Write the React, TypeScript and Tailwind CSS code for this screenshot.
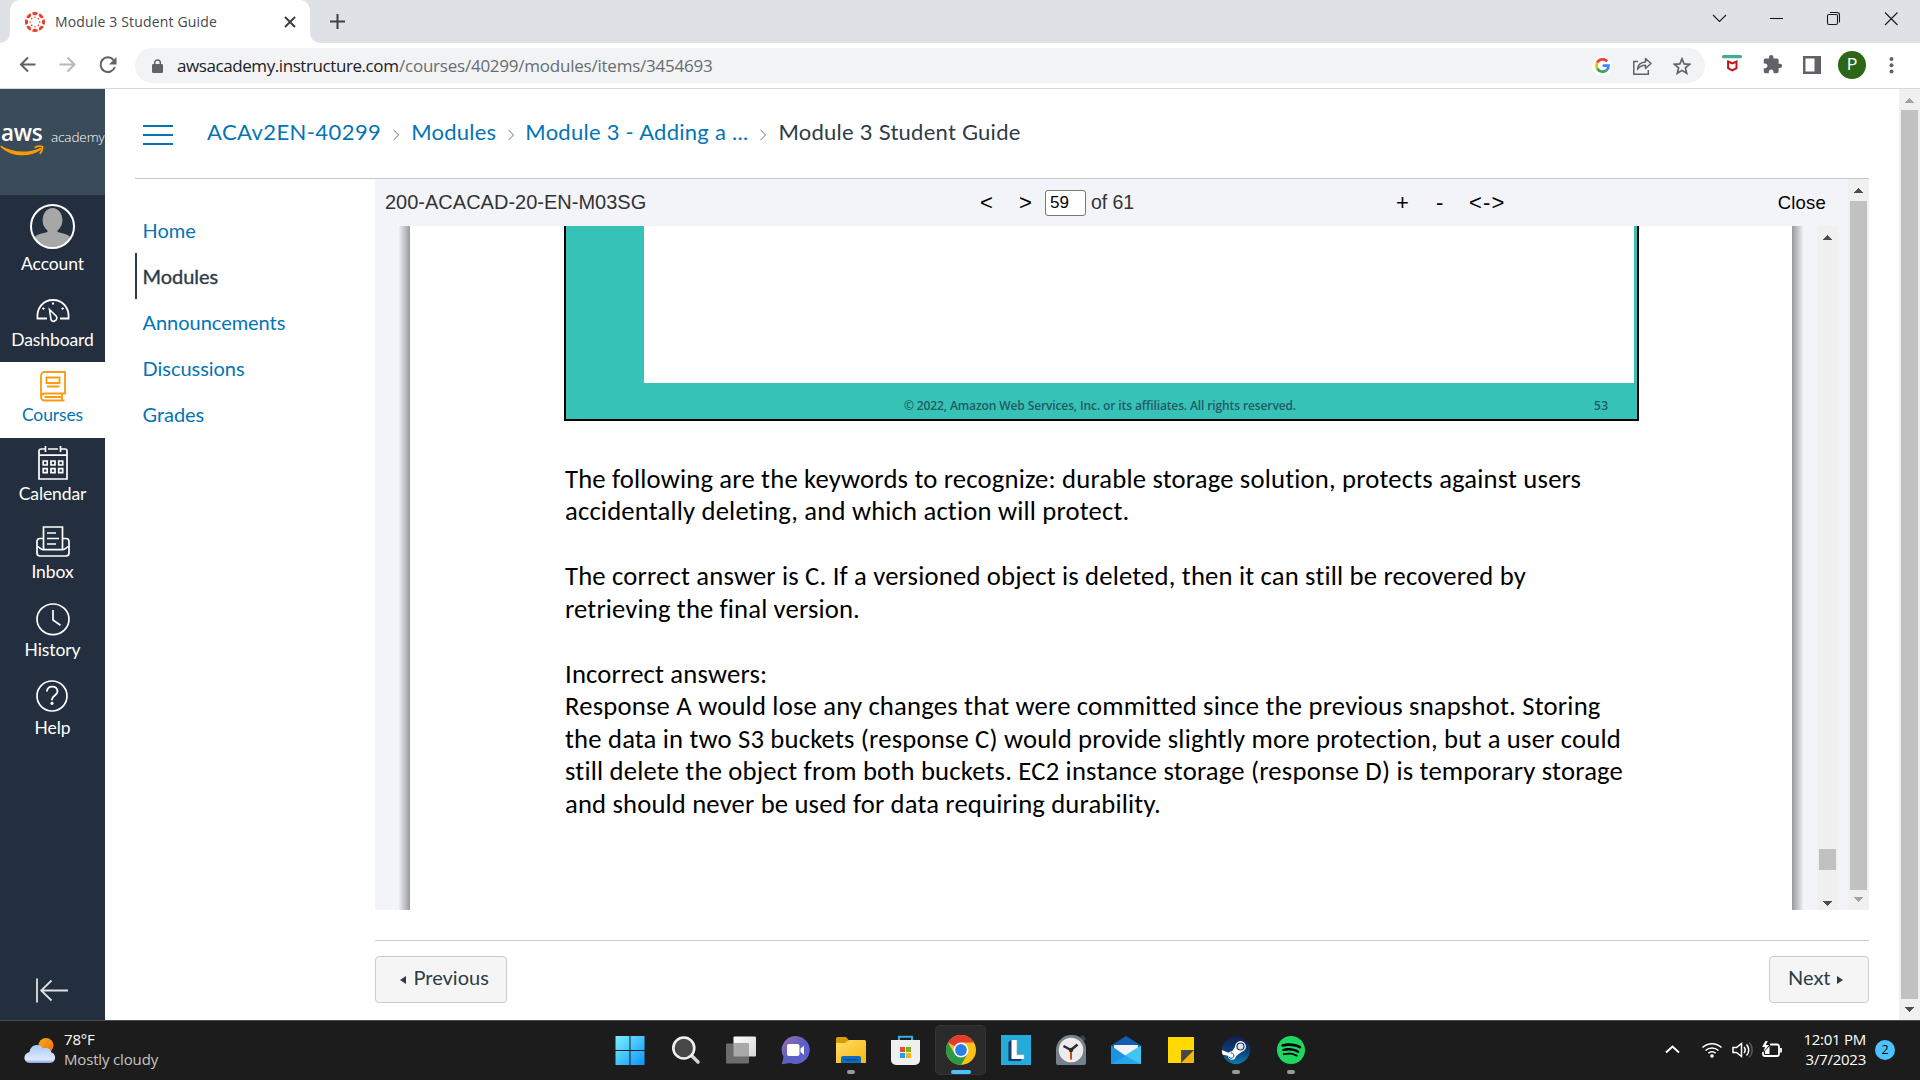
import type { ReactNode } from "react";
import { FaSpotify } from "react-icons/fa";
import { MdExtension } from "react-icons/md";

function CanvasFavicon() {
  return (
    <svg width="20" height="20" viewBox="0 0 20 20" fill="#e8402a">
      {[0, 45, 90, 135, 180, 225, 270, 315].map((a) => (
        <g key={a} transform={`rotate(${a} 10 10)`}>
          <path d="M7.2 .4a10 10 0 0 1 5.6 0 2.8 2.8 0 0 1-5.6 0Z" />
          <circle cx="10" cy="5.3" r=".8" />
        </g>
      ))}
    </svg>
  );
}

function TabStrip() {
  return (
    <div className="flex h-[43px] bg-[#dee1e6]">
      <div className="flex w-[10px] items-end bg-white">
        <div className="h-full w-full rounded-br-[10px] bg-[#dee1e6]" />
      </div>
      <div className="flex h-full w-[300px] items-center rounded-t-[10px] bg-white pl-[15px]">
        <CanvasFavicon />
        <span className="ml-[10px] w-[229px] pb-px whitespace-nowrap font-['Open_Sans',sans-serif] text-[14px] tracking-[0.16px] text-[#45484c]">
          Module 3 Student Guide
        </span>
        <svg width="12" height="12" viewBox="0 0 12 12" stroke="#3c4043" strokeWidth="2">
          <path d="M1 1l10 10M11 1l-10 10" />
        </svg>
      </div>
      <div className="flex w-[10px] items-end bg-white">
        <div className="h-full w-full rounded-bl-[10px] bg-[#dee1e6]" />
      </div>
      <svg className="mt-[14px] ml-[10px]" width="15" height="15" viewBox="0 0 15 15" stroke="#3c4043" strokeWidth="2">
        <path d="M0 7.5h15M7.5 0v15" />
      </svg>
      <svg className="mt-[11px] ml-auto mr-[22px]" width="186" height="16" viewBox="0 0 186 16" fill="none" stroke="#1b1b1b" strokeWidth="1.1">
        <path d="M1 4l6.500 6.500L14 4" />
        <path d="M58 7.500h13" />
        <rect x="115.500" y="3.500" width="10" height="10" rx="1.500" />
        <path d="M118 1.500h7a2.500 2.500 0 0 1 2.500 2.500v7.500" />
        <path d="M173 1.500l12.500 12.500M185.500 1.500L173 14" />
      </svg>
    </div>
  );
}

function AddressBar() {
  return (
    <div className="flex h-[46px] items-start border-b border-[#d5d7da] bg-white">
      <svg className="mt-[12px] ml-[19px]" width="100" height="20" viewBox="0 0 100 20" fill="none" strokeWidth="2">
        <path stroke="#5f6368" d="M16.500 9.500H2M9 2.500l-7 7 7 7" />
        <path stroke="#b6b8ba" d="M40.500 9.500H55M48.500 2.500l7 7-7 7" />
        <path stroke="#5f6368" d="M94.500 5A7.300 7.300 0 1 0 95.800 12" />
        <path fill="#5f6368" stroke="none" d="M97.500 2v7.500H90z" />
      </svg>
      <div className="mt-[5px] ml-[16px] flex h-[35px] w-[1570px] items-center rounded-full bg-[#f1f3f4] font-['Open_Sans',sans-serif] text-[17px]">
        <svg className="ml-[17px]" width="11" height="14" viewBox="0 0 11 14">
          <rect y="5" width="11" height="9" rx="1.300" fill="#5f6368" />
          <path d="M2.700 5.500V3.700a2.800 2.800 0 0 1 5.600 0v1.800" fill="none" stroke="#5f6368" strokeWidth="1.500" />
        </svg>
        <span className="ml-[14px] w-[222px] whitespace-nowrap tracking-[-0.42px] text-[#202124]">awsacademy.instructure.com</span>
        <span className="whitespace-nowrap tracking-[-0.23px] text-[#686c70]">/courses/40299/modules/items/3454693</span>
        <span className="ml-auto flex h-[20px] w-[20px] items-center justify-center rounded-full bg-white">
          <svg width="15" height="15" viewBox="0 0 15 15" fill="none" strokeWidth="2.700">
            <path d="M12.200 3.300A6.100 6.100 0 0 0 2.200 4.700" stroke="#ea4335" />
            <path d="M2.200 4.700a6.100 6.100 0 0 0 0 5.600" stroke="#fbbc05" />
            <path d="M2.200 10.300a6.100 6.100 0 0 0 9.300 2" stroke="#34a853" />
            <path d="M11.500 12.300a6.100 6.100 0 0 0 2-4.600H7.700" stroke="#4285f4" />
          </svg>
        </span>
        <svg className="ml-[21px]" width="19" height="18" viewBox="0 0 19 18" fill="none" stroke="#5f6368" strokeWidth="1.500">
          <path d="M5 4.500H.8v12.700h14.500V13" />
          <path d="M4.500 12.500c.4-5 3.500-7.300 8-7.500V1.500l5.500 5-5.500 5V8.200c-4 0-6.300 1-8 4.300Z" strokeLinejoin="round" />
        </svg>
        <svg className="mr-[14px] ml-[21px]" width="18" height="18" viewBox="0 0 18 18" fill="none" stroke="#5f6368" strokeWidth="1.700">
          <path d="M9 1.800l2.100 5.100 5.500.4-4.200 3.600 1.300 5.400L9 13.400l-4.700 2.900 1.300-5.400L1.400 7.300l5.500-.4z" />
        </svg>
      </div>
      <svg className="mt-[12px] ml-[17px]" width="21" height="17" viewBox="0 0 21 17">
        <rect x="0" y="0" width="20" height="3.200" rx="1.500" fill="#43ad8e" />
        <path d="M6.100 6.500l4.200 2 4.200-2v6.700l-4.200 2.100-4.200-2.100z" fill="none" stroke="#c4121b" strokeWidth="2" />
      </svg>
      <MdExtension className="mt-[11px] ml-[19px]" size={21} color="#5f6368" />
      <svg className="mt-[13px] ml-[20px]" width="18" height="18" viewBox="0 0 18 18">
        <path d="M0 0h18v18H0zM2.500 2.500v13h9v-13z" fill="#5f6368" fillRule="evenodd" />
      </svg>
      <span className="mt-[8px] ml-[17px] flex h-[28px] w-[28px] items-center justify-center rounded-full bg-[#2b6619] font-[Roboto,sans-serif] text-[16px] text-white">
        P
      </span>
      <svg className="mt-[14px] ml-[23px]" width="5" height="17" viewBox="0 0 5 17" fill="#5f6368">
        <circle cx="2.500" cy="2" r="2" />
        <circle cx="2.500" cy="8.300" r="2" />
        <circle cx="2.500" cy="14.500" r="2" />
      </svg>
    </div>
  );
}

function NavItem({ label, box, icon }: { label: string; box: string; icon: ReactNode }) {
  return (
    <div className={`flex flex-col items-center justify-between ${box}`}>
      {icon}
      <span className="text-[17.5px] leading-[20px] tracking-[-0.1px]">{label}</span>
    </div>
  );
}

function Sidebar() {
  return (
    <nav className="flex h-full w-[105px] shrink-0 flex-col bg-[#232f3e] font-[Lato,sans-serif] text-white">
      <div className="flex h-[106px] overflow-hidden bg-[#394b58]">
        <div className="flex w-[50px] flex-col pt-[34px]">
          <span className="-mt-px ml-px h-[22px] font-['Open_Sans',sans-serif] text-[22.5px] font-semibold leading-[22px] tracking-[-0.3px]">aws</span>
          <svg className="mt-px" width="45" height="12" viewBox="0 0 45 12" fill="#ff9900">
            <path d="M1.200 .8C12 7.500 28 8.500 39.500 3.200c1.500-.6 2.500.8 1.300 1.800C30 12.500 12 12.500 .8 2.200 0 1.300 .4 .4 1.200 .8Z" />
            <path d="M34.500 2.600c3-1.300 6.500-1.600 8-.8.300 2-.9 5-2.700 7" fill="none" stroke="#ff9900" strokeWidth="1.800" />
          </svg>
        </div>
        <span className="mt-[38px] ml-px whitespace-nowrap font-['Open_Sans',sans-serif] text-[13.5px] font-light leading-[20px] tracking-[-0.1px]">academy</span>
      </div>
      <NavItem
        label="Account"
        box="h-[90px] pt-[9px] pb-[11px]"
        icon={
          <svg width="45" height="45" viewBox="0 0 45 45">
            <defs>
              <clipPath id="avatar"><circle cx="22.500" cy="22.500" r="21.500" /></clipPath>
            </defs>
            <g clipPath="url(#avatar)" fill="#a7a7a7">
              <ellipse cx="22.500" cy="16" rx="10" ry="12" />
              <path d="M17.500 24h10v4c5 1.500 11 2 13.500 6v11H4V34c2.500-4 8.500-4.500 13.500-6z" />
            </g>
            <circle cx="22.500" cy="22.500" r="21.500" fill="none" stroke="#fff" strokeWidth="2" />
          </svg>
        }
      />
      <NavItem
        label="Dashboard"
        box="h-[77px] pt-[14px] pb-[12px]"
        icon={
          <svg width="34" height="24" viewBox="0 0 34 24" fill="none" stroke="#fff" strokeWidth="1.800">
            <path d="M11 19.500H1.500C.5 9 7 1 17 1s16.500 8 15.500 18.500H24" />
            <path d="M13.500 10.500l6.800 6.800a3 3 0 0 1-5.300 3.400z" strokeWidth="1.600" />
            <path d="M16 4.500h2M6.500 9l1.800 1.200M27.500 9l-1.800 1.200" strokeWidth="2" />
          </svg>
        }
      />
      <div className="bg-white text-[#0374b5]">
        <NavItem
          label="Courses"
          box="h-[76px] pt-[9px] pb-[13px]"
          icon={
            <svg width="26" height="31" viewBox="0 0 26 31" fill="none" stroke="#fc9a11" strokeWidth="1.800">
              <path d="M1 26V4.500A3.500 3.500 0 0 1 4.500 1H25v21.500H4.500A3.700 3.700 0 0 0 1 26a3.700 3.700 0 0 0 3.500 3.500H24.500M22 23v6M4.500 26H21" />
              <path d="M6.500 6.500h13V12h-13zM7 15.500h12.500" />
            </svg>
          }
        />
      </div>
      <NavItem
        label="Calendar"
        box="h-[78px] pt-[8px] pb-[12px]"
        icon={
          <svg width="30" height="34" viewBox="0 0 30 34" fill="none" stroke="#fff" strokeWidth="1.700">
            <path d="M8 3H3a2 2 0 0 0-2 2v28h28V5a2 2 0 0 0-2-2h-5M10 3h10M1.500 9.200h27M7.500 0v6M22.500 0v6" />
            <path d="M5.200 15h4v4h-4zM13 15h4v4h-4zM20.700 15h4v4h-4zM5.200 22.700h4v4h-4zM13 22.700h4v4h-4zM20.700 22.700h4v4h-4z" />
          </svg>
        }
      />
      <NavItem
        label="Inbox"
        box="h-[78px] pt-[10px] pb-[12px]"
        icon={
          <svg width="34" height="31" viewBox="0 0 34 31" fill="none" stroke="#fff" strokeWidth="1.700">
            <path d="M7.500 23.500V1h19v22.500M7 12.500H4a3 3 0 0 0-3 3V27a3 3 0 0 0 3 3h26a3 3 0 0 0 3-3V15.500a3 3 0 0 0-3-3h-3" />
            <path d="M1 20.500c2.500 0 3.500 3.200 6 3.200h20c2.500 0 3.500-3.200 6-3.200M11 7h9M11 12.500h12M11 18h9" />
          </svg>
        }
      />
      <NavItem
        label="History"
        box="h-[78px] pt-[9px] pb-[12px]"
        icon={
          <svg width="34" height="33" viewBox="0 0 34 33" fill="none" stroke="#fff" strokeWidth="1.700">
            <ellipse cx="17" cy="16.300" rx="16" ry="15.300" />
            <path d="M17 7v10l7.500 5.300" />
          </svg>
        }
      />
      <NavItem
        label="Help"
        box="h-[78px] pt-[8px] pb-[12px]"
        icon={
          <svg className="mr-[2px]" width="32" height="32" viewBox="0 0 32 32" fill="none" stroke="#fff" strokeWidth="1.700">
            <circle cx="16" cy="16" r="15" />
            <path d="M11 11.500c0-6.500 10.500-6.500 10.500 0 0 4-5.500 4-5.500 8v.8" strokeWidth="1.900" />
            <circle cx="16" cy="23.300" r=".8" fill="#fff" />
          </svg>
        }
      />
      <svg className="mx-auto mt-auto mb-[17px] pr-px" width="34" height="25" viewBox="0 0 33 25" fill="none" stroke="#dfe1e4" strokeWidth="1.800">
        <path d="M1 .5v24M5.500 12.500H32M15.500 2.500l-10.300 10 10.300 10" />
      </svg>
    </nav>
  );
}

function Caret({ space }: { space: string }) {
  return (
    <svg className={`mt-[3px] ${space}`} width="6" height="12" viewBox="0 0 6 12" fill="none" stroke="#6b7780" strokeWidth="1">
      <path d="M.5 .8L5.500 6 .5 11.200" />
    </svg>
  );
}

function Breadcrumbs() {
  return (
    <header className="mx-[30px] flex h-[90px] items-center border-b border-[#c3c9cf] text-[22px] whitespace-nowrap text-[#0374b5]">
      <svg className="mt-[2px] ml-[8px]" width="30" height="20" viewBox="0 0 30 20" fill="#0374b5">
        <path d="M0 0h30v2H0zM0 9h30v2H0zM0 18h30v2H0z" />
      </svg>
      <span className="mb-[5px] ml-[34px] tracking-[0.42px]">ACAv2EN-40299</span>
      <Caret space="mx-[12px]" />
      <span className="mb-[5px] tracking-[0.22px]">Modules</span>
      <Caret space="mr-[11px] ml-[12px]" />
      <span className="mb-[5px] tracking-[0.26px]">Module 3 - Adding a ...</span>
      <Caret space="mx-[12px]" />
      <span className="mb-[5px] tracking-[0.26px] text-[#2d3b45]">Module 3 Student Guide</span>
    </header>
  );
}

function CourseNav() {
  return (
    <div className="ml-[30px] flex w-[240px] shrink-0 flex-col pt-[28px] text-[20px] leading-[46px] tracking-[-0.03px] text-[#0374b5]">
      <span className="pl-[7.500px]">Home</span>
      <div className="flex h-[46px] items-center border-l-2 border-[#2d3b45] pl-[5.500px] text-[#2d3b45] [-webkit-text-stroke:0.350px_#2d3b45]">
        <span>Modules</span>
      </div>
      <span className="pl-[7.500px]">Announcements</span>
      <span className="pl-[7.500px]">Discussions</span>
      <span className="pl-[7.500px]">Grades</span>
    </div>
  );
}

function Arrow({ down, tone }: { down?: boolean; tone: string }) {
  return (
    <svg width="9" height="5" viewBox="0 0 9 5" fill={tone} shapeRendering="crispEdges">
      <path d={down ? "M0 0h9L4.500 5z" : "M0 5h9L4.500 0z"} />
    </svg>
  );
}

function ViewerBar() {
  return (
    <div className="flex h-[47px] shrink-0 items-center bg-[#f3f4f9] pl-[10px] font-['Liberation_Sans',Arial,sans-serif] text-[20px] leading-[24px] whitespace-nowrap text-black">
      <span className="mb-[2px] w-[595px] text-[#333]">200-ACACAD-20-EN-M03SG</span>
      <span className="mt-px w-[39px] text-[22px]">&lt;</span>
      <span className="mt-px w-[26px] text-[22px]">&gt;</span>
      <span className="mt-px flex h-[26px] w-[41px] items-center rounded-[3px] border border-[#767676] bg-white pl-[4px] text-[17px]">59</span>
      <span className="mb-[2px] ml-[5px] w-[305px] text-[19.500px] tracking-[-0.1px] text-[#333]">of 61</span>
      <span className="mt-px w-[40px] text-[22px]">+</span>
      <span className="mt-px w-[33px] text-[22px]">-</span>
      <span className="mt-px text-[22px] tracking-[1.2px]">&lt;-&gt;</span>
      <span className="mt-px mr-[22px] ml-auto text-[18.500px] tracking-[0.19px]">Close</span>
    </div>
  );
}

const notes: { text: string; fit: string }[] = [
  { text: "The following are the keywords to recognize: durable storage solution, protects against users", fit: "tracking-[0.18px]" },
  { text: "accidentally deleting, and which action will protect.", fit: "tracking-[0.18px]" },
  { text: "", fit: "" },
  { text: "The correct answer is C. If a versioned object is deleted, then it can still be recovered by", fit: "tracking-[0.18px]" },
  { text: "retrieving the final version.", fit: "tracking-[0.14px]" },
  { text: "", fit: "" },
  { text: "Incorrect answers:", fit: "tracking-[0.18px]" },
  { text: "Response A would lose any changes that were committed since the previous snapshot. Storing", fit: "tracking-[0.2px]" },
  { text: "the data in two S3 buckets (response C) would provide slightly more protection, but a user could", fit: "tracking-[0.18px]" },
  { text: "still delete the object from both buckets. EC2 instance storage (response D) is temporary storage", fit: "tracking-[0.19px]" },
  { text: "and should never be used for data requiring durability.", fit: "tracking-[0.16px]" },
];

function DocumentPage() {
  return (
    <div className="flex min-h-0 flex-1 bg-[#f3f4f9]">
      <div className="ml-[24px] w-[11px] bg-linear-to-r from-[#eceef2] to-[#98999d]" />
      <div className="w-[1382px] bg-white pl-[154px]">
        <div className="flex h-[195px] w-[1075px] flex-col border-x-2 border-b-2 border-black bg-[#36c2b6]">
          <div className="mr-[3px] ml-[78px] h-[157px] bg-white" />
          <div className="flex flex-1 items-center pt-[9px] pl-[338px] font-['Open_Sans',sans-serif] text-[12px] font-semibold leading-[14px] whitespace-nowrap text-[#235a64]">
            <span className="w-[690px] tracking-[-0.119px]">© 2022, Amazon Web Services, Inc. or its affiliates. All rights reserved.</span>
            <span className="tracking-[0.5px]">53</span>
          </div>
        </div>
        <div className="mt-[41.500px] ml-px font-[Carlito,Lato,sans-serif] text-[26.67px] leading-[32.5px] whitespace-nowrap text-black">
          {notes.map((n, i) => (
            <div key={i} className={`h-[32.5px] ${n.fit}`}>{n.text}</div>
          ))}
        </div>
      </div>
      <div className="w-[11px] bg-linear-to-r from-[#98999d] to-[#eceef2]" />
      <div className="ml-[14px] flex w-[21px] flex-col items-center bg-[#f0f0f0] pt-[9px]">
        <Arrow tone="#4e4e4e" />
        <div className="mt-[609px] h-[21px] w-[17px] bg-[#c1c1c1]" />
        <div className="mt-[31px]"><Arrow down tone="#4e4e4e" /></div>
      </div>
    </div>
  );
}

function Viewer() {
  return (
    <div className="flex h-[731px]">
      <div className="flex w-[1473px] flex-col bg-[#f3f4f9]">
        <ViewerBar />
        <DocumentPage />
      </div>
      <div className="flex w-[21px] flex-col items-center bg-[#f0f0f0] pt-[9px]">
        <Arrow tone="#4e4e4e" />
        <div className="mt-[8px] h-[689px] w-[17px] bg-[#c1c1c1]" />
        <div className="mt-[7px]"><Arrow down tone="#a3a3a3" /></div>
      </div>
    </div>
  );
}

function Pager() {
  return (
    <div className="mt-[30px] flex justify-between border-t border-[#c7cdd1] pt-[15px] text-[20px] text-[#2d3b45]">
      <div className="flex h-[47px] w-[132px] items-center rounded-[4px] border border-[#c7cdd1] bg-[#f5f5f5] pl-[24px]">
        <svg width="6" height="8" viewBox="0 0 6 8" fill="#2d3b45"><path d="M6 0v8L0 4z" /></svg>
        <span className="mb-[5px] ml-[7.500px]">Previous</span>
      </div>
      <div className="flex h-[47px] w-[100px] items-center rounded-[4px] border border-[#c7cdd1] bg-[#f5f5f5] pl-[18px]">
        <span className="mb-[5px] w-[49px]">Next</span>
        <svg width="6" height="8" viewBox="0 0 6 8" fill="#2d3b45"><path d="M0 0v8l6-4z" /></svg>
      </div>
    </div>
  );
}

const cloud = "M7 27c-8 0-9-9-1.500-11C6.500 9 15 6.500 19 12.500c5-1.500 7.500 1 8.500 4C33 18 32 27 26 27Z";

function ChromeIcon() {
  return (
    <svg width="30" height="30" viewBox="0 0 30 30">
      <circle cx="15" cy="15" r="15" fill="#fbc116" />
      <path d="M15 15L2 7.500A15 15 0 0 1 28 7.500H15Z" fill="#e33b2e" />
      <path d="M2 7.500l6.500 11.300L15 22.500 15 30A15 15 0 0 1 2 7.500Z" fill="#2a9a47" />
      <path d="M8.500 18.800L15 15l6.500 3.800L15 30Z" fill="#2a9a47" />
      <circle cx="15" cy="15" r="7.500" fill="#fff" />
      <circle cx="15" cy="15" r="5.900" fill="#2f7de9" />
    </svg>
  );
}

const apps: { name: string; state?: "open" | "active"; icon: ReactNode }[] = [
  {
    name: "start",
    icon: (
      <svg className="mr-[2px]" width="30" height="30" viewBox="0 0 30 30">
        <defs><linearGradient id="win" gradientUnits="userSpaceOnUse" x1="0" y1="1" x2="30" y2="30"><stop stopColor="#7ef0ff" /><stop offset="1" stopColor="#0a94fb" /></linearGradient></defs>
        <path d="M.5 1h14v14H.5zM15.500 1h14v14h-14zM.5 16h14v14H.5zM15.500 16h14v14h-14z" fill="url(#win)" />
      </svg>
    ),
  },
  {
    name: "search",
    icon: (
      <svg width="30" height="30" viewBox="0 0 30 30">
        <path d="M20 20l7 7" stroke="#cfd6da" strokeWidth="3.500" strokeLinecap="round" />
        <circle cx="12.800" cy="13" r="10.500" fill="#474747" stroke="#eef1f2" strokeWidth="2.600" />
      </svg>
    ),
  },
  {
    name: "task view",
    icon: (
      <svg width="30" height="30" viewBox="0 0 30 30">
        <defs><linearGradient id="tv" x1="0" y1="0" x2="1" y2="1"><stop stopColor="#fff" /><stop offset="1" stopColor="#d5d5d5" /></linearGradient></defs>
        <rect x="7.500" y="1.500" width="22.500" height="20" rx="1" fill="url(#tv)" />
        <rect x="0" y="8.500" width="23" height="20" rx="1" fill="#6c6c6c" />
        <rect x="7.500" y="8.500" width="15.500" height="13" fill="#a9a9a9" />
      </svg>
    ),
  },
  {
    name: "chat",
    icon: (
      <svg width="30" height="30" viewBox="0 0 30 30">
        <defs><linearGradient id="chat" x1="0" y1="0" x2="1" y2="1"><stop stopColor="#a06fae" /><stop offset=".5" stopColor="#5c5fc4" /><stop offset="1" stopColor="#5a62d0" /></linearGradient></defs>
        <path d="M15 1a14 14 0 1 1-5.500 27L.8 29.200 2.600 22A14 14 0 0 1 15 1Z" fill="url(#chat)" />
        <rect x="6" y="9" width="12.500" height="12" rx="2" fill="#fff" />
        <path d="M19.500 13.500l3.500-2.800v9l-3.500-2.800z" fill="#fff" />
      </svg>
    ),
  },
  {
    name: "explorer",
    state: "open",
    icon: (
      <svg width="30" height="30" viewBox="0 0 30 30">
        <defs><linearGradient id="fe" x1="0" y1="0" x2="1" y2="1"><stop stopColor="#ffdc6d" /><stop offset="1" stopColor="#f8b70c" /></linearGradient></defs>
        <path d="M0 3.500A1.500 1.500 0 0 1 1.500 2H10l3 3.500V10H0z" fill="#d99c05" />
        <path d="M0 8h9l4-3h15.500A1.500 1.500 0 0 1 30 6.500V28H0z" fill="url(#fe)" />
        <path d="M5 28v-5a2 2 0 0 1 2-2h16a2 2 0 0 1 2 2v5z" fill="#0f6cbd" />
        <path d="M9 24.800h12.500" stroke="#0a4a8a" strokeWidth="1.300" />
      </svg>
    ),
  },
  {
    name: "store",
    icon: (
      <svg width="30" height="30" viewBox="0 0 30 30">
        <path d="M8 6.500V1.700h13v4.800" fill="none" stroke="#2bb0ea" strokeWidth="2" />
        <path d="M0 5h29v20a5 5 0 0 1-5 5H5a5 5 0 0 1-5-5z" fill="#f0f0f0" />
        <path d="M9 12h5v5H9z" fill="#e8502b" /><path d="M15 12h5v5h-5z" fill="#7cb518" />
        <path d="M9 18h5v5H9z" fill="#1ba1e8" /><path d="M15 18h5v5h-5z" fill="#f7b50e" />
      </svg>
    ),
  },
  { name: "chrome", state: "active", icon: <ChromeIcon /> },
  {
    name: "lockdown",
    icon: (
      <span className="flex h-[30px] w-[30px] items-center justify-center bg-[#25abd9] pb-[2px] pl-[3px] font-['Open_Sans',sans-serif] text-[26px] font-extrabold leading-[28px] text-white [text-shadow:-1px_0_0_#123a76,-2px_1px_0_#123a76,-3px_2px_0_#123a76]">
        L
      </span>
    ),
  },
  {
    name: "clock",
    icon: (
      <svg width="30" height="30" viewBox="0 0 30 30">
        <path d="M24 2l3-2 3 4-3 3z" fill="#3c4247" />
        <path d="M0 15A15 15 0 0 1 15 0a14 14 0 0 1 15 15v13a2 2 0 0 1-2 2H2a2 2 0 0 1-2-2z" fill="#76828b" />
        <circle cx="15" cy="15" r="12.300" fill="#ececec" />
        <path d="M15 15v9.500" stroke="#d8430f" strokeWidth="2" />
        <path d="M7.500 11L15 15l6.500-5.500" fill="none" stroke="#2a2a2a" strokeWidth="2.400" />
        <circle cx="15" cy="15" r="2.200" fill="#2a2a2a" />
      </svg>
    ),
  },
  {
    name: "mail",
    icon: (
      <svg width="30" height="30" viewBox="0 0 30 30">
        <path d="M0 10.500L15 1l15 9.500V20H0z" fill="#0f5fb0" />
        <path d="M3 10h24v8L15 22 3 18z" fill="#f1f1f1" />
        <path d="M30 10.500V29H0z" fill="#3fc6f4" />
        <path d="M0 10.500L26 29H0z" fill="#1c93e2" />
        <path d="M15 21l15 8H0z" fill="#2aa5ec" />
      </svg>
    ),
  },
  {
    name: "sticky notes",
    icon: (
      <svg width="30" height="30" viewBox="0 0 30 30">
        <path d="M2 2h26v13L15 28H2z" fill="#ffd900" />
        <path d="M15 15h13v13H15z" fill="#f5b800" />
        <path d="M15 15h13L15 28z" fill="#474747" />
      </svg>
    ),
  },
  {
    name: "steam",
    state: "open",
    icon: (
      <svg width="30" height="30" viewBox="0 0 30 30">
        <defs>
          <linearGradient id="steam" x1="0" y1="0" x2="0" y2="1"><stop stopColor="#111d4a" /><stop offset=".5" stopColor="#0c3b74" /><stop offset="1" stopColor="#1079b3" /></linearGradient>
          <clipPath id="steam-disc"><circle cx="15" cy="15" r="14.200" /></clipPath>
        </defs>
        <g clipPath="url(#steam-disc)">
          <circle cx="15" cy="15" r="14.200" fill="url(#steam)" />
          <path d="M0 14.800l9.500 3.700 5-7.300 7 5-8 6-13.500-3z" fill="#fff" />
        </g>
        <circle cx="19.500" cy="11.500" r="5.400" fill="#fff" />
        <circle cx="19.500" cy="11.500" r="3.500" fill="#dfe6ee" stroke="#12336a" strokeWidth="1.200" />
        <circle cx="11" cy="20.500" r="4.200" fill="#fff" />
        <path d="M9.500 18a2.700 2.700 0 1 1-1.800 3.600" fill="none" stroke="#0f5590" strokeWidth="1" />
      </svg>
    ),
  },
  {
    name: "spotify",
    state: "open",
    icon: (
      <svg width="30" height="30" viewBox="0 0 30 30">
        <circle cx="15" cy="15" r="13.500" fill="#000" />
        <FaSpotify x="0.500" y="0.500" size={29} color="#1ed760" />
      </svg>
    ),
  },
];

function Taskbar() {
  return (
    <footer className="flex h-[60px] border-t border-[#4a4a4a] bg-[#1c1c1c] font-['Open_Sans',sans-serif] text-[15px] leading-[20px] whitespace-nowrap text-white">
      <div className="flex w-[603px] pl-[24px]">
        <svg className="mt-[15px]" width="32" height="30" viewBox="0 0 32 30">
          <defs>
            <linearGradient id="sun" x1="0" y1="0" x2="1" y2="1"><stop stopColor="#f6b01e" /><stop offset="1" stopColor="#ee6a10" /></linearGradient>
            <linearGradient id="cloud" x1="0" y1="0" x2="0" y2="1"><stop stopColor="#a9c8fa" /><stop offset=".8" stopColor="#dfe9fb" /><stop offset="1" stopColor="#7fa3e8" /></linearGradient>
          </defs>
          <circle cx="22" cy="9.500" r="7.500" fill="url(#sun)" />
          <path d={cloud} fill="url(#cloud)" />
        </svg>
        <div className="ml-[8px] flex flex-col pt-[8px] tracking-[-0.16px]">
          <span>78°F</span>
          <span className="text-[#c4c4c4]">Mostly cloudy</span>
        </div>
      </div>
      {apps.map((a) => (
        <div key={a.name} className="flex w-[55px] justify-center">
          <div className={a.state === "active" ? "mt-[4px] flex h-[50px] w-[51px] flex-col items-center rounded-[5px] border border-[#353535] bg-[#2a2a2a] pt-[9px]" : "mt-[4px] flex h-[50px] w-[51px] flex-col items-center pt-[10px]"}>
            <div className="flex h-[30px] items-center">{a.icon}</div>
            {a.state === "active" && <div className="mt-[5px] h-[4px] w-[20px] rounded-full bg-[#4cc2ff]" />}
            {a.state === "open" && <div className="mt-[5px] h-[4px] w-[8px] rounded-full bg-[#9a9a9a]" />}
          </div>
        </div>
      ))}
      <svg className="mt-[16px] ml-[346px]" width="120" height="24" viewBox="0 0 120 24" fill="none" stroke="#fff" strokeWidth="1.500">
        <path d="M2 15.500l6.500-6 6.500 6" strokeWidth="2" />
        <path d="M38.500 10.500a14 14 0 0 1 19 0M41.500 13.500a9.500 9.500 0 0 1 13 0M44.300 16.300a5.500 5.500 0 0 1 7.400 0" />
        <circle cx="48" cy="19" r="1.800" fill="#fff" stroke="none" />
        <path d="M69 10.500h3.500l5-4v13l-5-4H69zM80 10c1.500 1.800 1.500 4.200 0 6M82.500 7.500c3 3.200 3 7.800 0 11" />
        <path d="M85.200 5.500c4 4.500 4 10.500 0 15" stroke="#5a5a5a" />
        <path d="M106 7.500h7a2 2 0 0 1 2 2v7.500a2 2 0 0 1-2 2h-12a2 2 0 0 1-2-2V15M117 11v4.500" strokeWidth="1.800" />
        <path d="M101.500 4l-3.500 6h3l-1.500 5 5.500-7h-3.200l2-4zM101 17v-3l4.500-5v8z" fill="#fff" stroke="none" />
      </svg>
      <div className="ml-auto flex w-[70px] flex-col items-end pt-[8px] tracking-[-0.26px]">
        <span>12:01 PM</span>
        <span>3/7/2023</span>
      </div>
      <span className="mt-[19px] mr-[25px] ml-[9px] flex h-[20px] w-[20px] items-center justify-center rounded-full bg-[#4cc2ff] text-[12.500px] text-black">2</span>
    </footer>
  );
}

export default function App() {
  return (
    <div className="flex h-[1080px] w-[1920px] flex-col overflow-hidden bg-white">
      <TabStrip />
      <AddressBar />
      <div className="flex h-[931px]">
        <Sidebar />
        <main className="flex w-[1794px] flex-col font-[Lato,sans-serif]">
          <Breadcrumbs />
          <div className="flex">
            <CourseNav />
            <div className="w-[1494px]">
              <Viewer />
              <Pager />
            </div>
          </div>
        </main>
        <div className="flex w-[21px] flex-col items-center bg-[#f0f0f0] pt-[9px]">
          <Arrow tone="#a3a3a3" />
          <div className="mt-[7px] h-[889px] w-[17px] bg-[#c1c1c1]" />
          <div className="mt-[8px]"><Arrow down tone="#4e4e4e" /></div>
        </div>
      </div>
      <Taskbar />
    </div>
  );
}
